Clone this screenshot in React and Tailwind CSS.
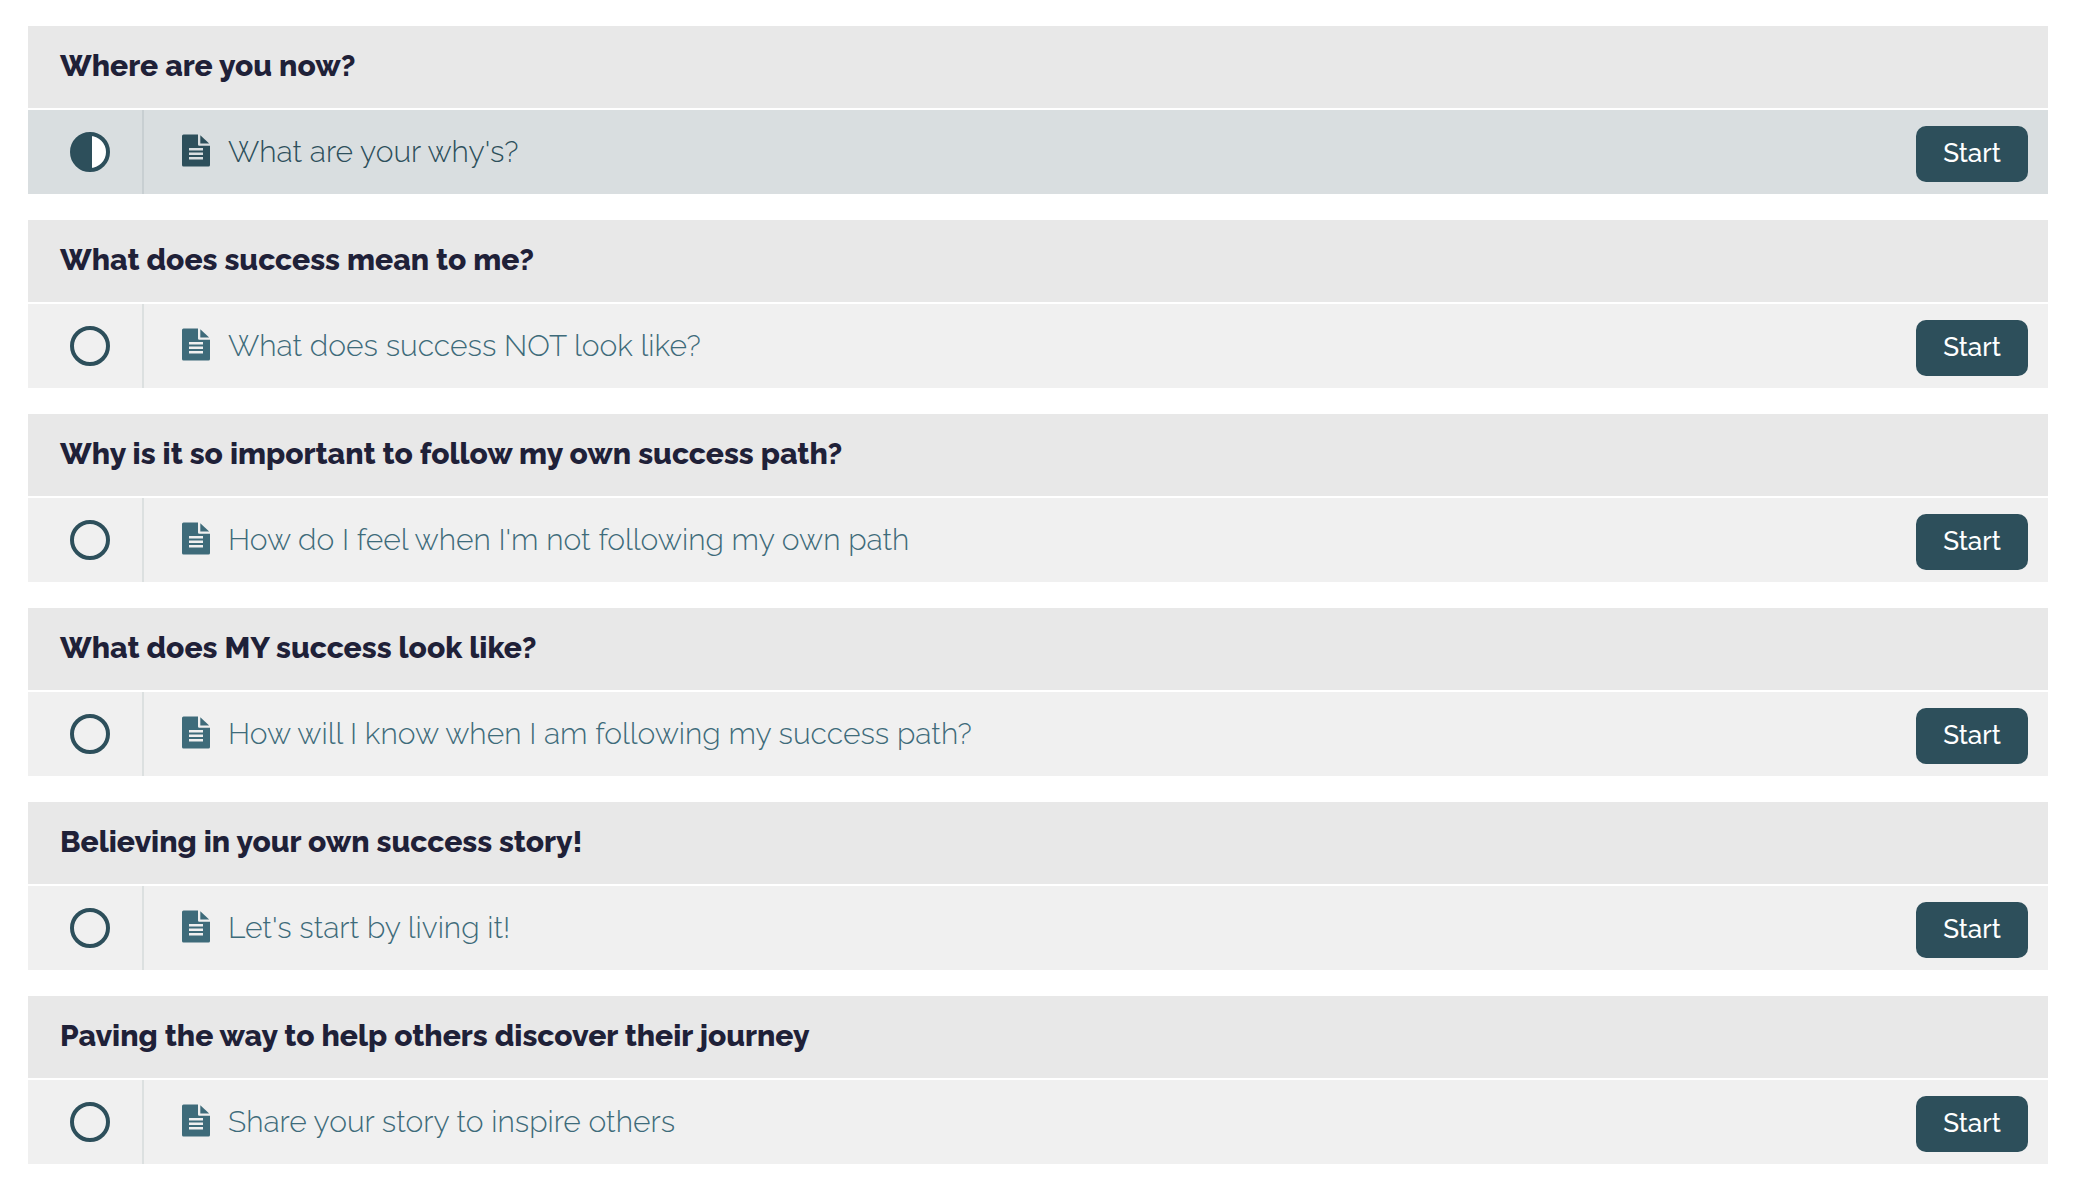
const sections = [
  { title: "Where are you now?", lesson: "What are your why's?", current: true },
  { title: "What does success mean to me?", lesson: "What does success NOT look like?" },
  { title: "Why is it so important to follow my own success path?", lesson: "How do I feel when I'm not following my own path" },
  { title: "What does MY success look like?", lesson: "How will I know when I am following my success path?" },
  { title: "Believing in your own success story!", lesson: "Let's start by living it!" },
  { title: "Paving the way to help others discover their journey", lesson: "Share your story to inspire others" },
];

function StatusIcon({ half }) {
  return (
    <svg viewBox="0 0 40 40" className="size-10 text-[#2d4f5b]" aria-hidden="true">
      <circle cx="20" cy="20" r="18" fill={half ? "#ffffff" : "none"} stroke="currentColor" strokeWidth="4" />
      {half && <path d="M22 1H20A19 19 0 0 0 20 39H22Z" fill="currentColor" />}
    </svg>
  );
}

function FileIcon() {
  return (
    <svg viewBox="0 0 28 33" className="mb-[3px] h-[33px] w-7 shrink-0" fill="currentColor" aria-hidden="true">
      <path
        fillRule="evenodd"
        d="M1.5 0.5H16V10.5A1.2 1.2 0 0 0 17.2 11.7H28V31A1.5 1.5 0 0 1 26.500 32.500H1.500A1.500 1.500 0 0 1 0 31V2A1.500 1.500 0 0 1 1.500 0.500ZM7 14V16.400H21V14ZM7 18.500V20.900H21V18.500ZM7 23V25.400H21V23Z"
      />
      <path d="M18.300 1.200L27.200 9.600H18.300Z" />
    </svg>
  );
}

function Section({ title, lesson, current }) {
  return (
    <section className="flex flex-col gap-0.5">
      <h2 className="bg-[#e8e8e8] px-8 pt-5 pb-[22px] text-[30px] leading-10 font-extrabold text-[#1f2138]">{title}</h2>
      <div className={current ? "flex bg-[#d9dee0] text-[#2d4f5b]" : "flex bg-[#f0f0f0] text-[#3e6b7a]"}>
        <div
          className={
            current
              ? "flex w-29 items-center border-r-2 border-[#c8cfd2] pl-[42px]"
              : "flex w-29 items-center border-r-2 border-[#dce0e0] pl-[42px]"
          }
        >
          <StatusIcon half={current} />
        </div>
        <a href="#lesson" className="flex flex-1 items-center gap-[18px] pl-[38px] text-[30px] leading-10 font-light">
          <FileIcon />
          <span>{lesson}</span>
        </a>
        <div className="pt-4 pr-5 pb-3">
          <button
            type="button"
            aria-label={`Start ${lesson}`}
            className="flex h-14 w-28 items-center justify-center rounded-[10px] bg-[#2d4f5b] pb-0.5 text-[26px] leading-8 font-medium text-white"
          >
            Start
          </button>
        </div>
      </div>
    </section>
  );
}

export default function App() {
  return (
    <main className="flex min-h-screen flex-col gap-[26px] bg-white pt-[26px] pr-[26px] pb-6 pl-7 font-['Raleway','Lato',sans-serif]">
      {sections.map((s) => (
        <Section key={s.title} {...s} />
      ))}
    </main>
  );
}
